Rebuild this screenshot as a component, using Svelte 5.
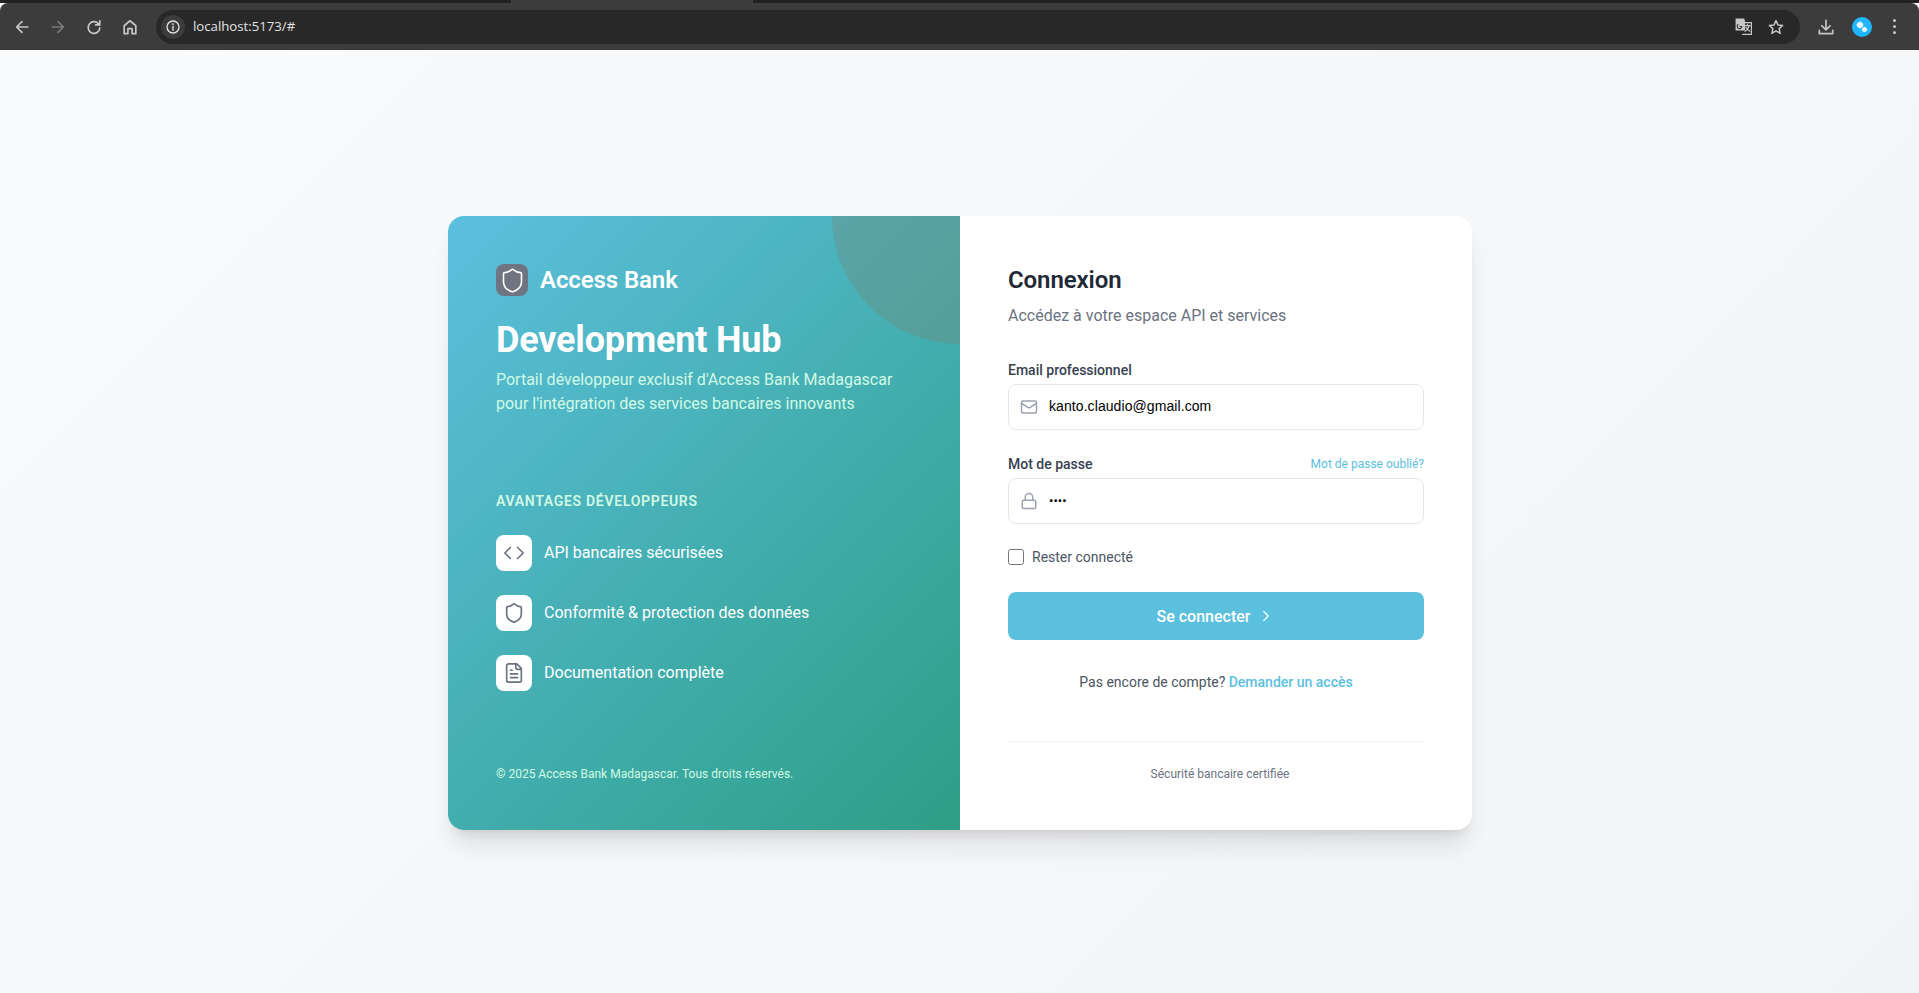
<script>
  const features = [
    { icon: 'code', text: 'API bancaires sécurisées' },
    { icon: 'shield', text: 'Conformité & protection des données' },
    { icon: 'doc', text: 'Documentation complète' }
  ];
  const shield = 'M20 13c0 5-3.500 7.500-7.660 8.950a1 1 0 0 1-.670-.010C7.500 20.500 4 18 4 13V6a1 1 0 0 1 1-1c2 0 4.500-1.200 6.240-2.720a1.170 1.170 0 0 1 1.520 0C14.510 3.810 17 5 19 5a1 1 0 0 1 1 1z';
</script>

<div class="browser">
  <div class="tabstrip"><span class="tab"></span></div>
  <div class="toolbar">
    <div class="navs">
      <svg class="nav" viewBox="0 0 24 24"><path d="M19 12H5.500M12 5.500 5.500 12l6.500 6.500"/></svg>
      <svg class="nav dim" viewBox="0 0 24 24"><path d="M5 12h13.500M12 5.500l6.500 6.500-6.500 6.500"/></svg>
      <svg class="nav" viewBox="0 0 24 24"><path d="M18 9a7 7 0 1 0 1 4M19 4.500V9.500h-5"/></svg>
      <svg class="nav" viewBox="0 0 24 24"><path d="M5 20V10.500L12 4.500l7 6V20h-4.500v-6h-5v6z"/></svg>
    </div>
    <div class="omni">
      <span class="info"><svg viewBox="0 0 24 24"><circle cx="12" cy="12" r="9"/><path d="M12 11v6M12 7v1.500"/></svg></span>
      <span class="url">localhost:5173/#</span>
      <span class="omni-right">
        <svg class="translate" viewBox="0 0 24 24"><path class="fill" d="M2 2h11l1 4v11H2z"/><path d="M10 7h12v15H11" /><path class="dark" d="M5 9.500a3 3 0 1 0 5 2.500H7.500"/><path d="M13.500 11h7M17 9v2M19 11c-1 4-3 6-5 7M15 13c1 2 3 4 5 5"/></svg>
        <svg class="star" viewBox="0 0 24 24"><path d="m12 3.500 2.600 5.800 6.200.7-4.600 4.200 1.300 6.200L12 17.200l-5.500 3.200 1.300-6.200L3.200 10l6.200-.7z"/></svg>
      </span>
    </div>
    <div class="tools">
      <svg class="nav" viewBox="0 0 24 24"><path d="M12 4v11M7 10.500l5 5 5-5M4 16v4h16v-4"/></svg>
      <span class="avatar"><span class="blob b1"></span><span class="blob b2"></span></span>
      <span class="dots"><i></i><i></i><i></i></span>
    </div>
  </div>

  <main class="page">
    <div class="card">
      <section class="left">
        <span class="circle"></span>
        <div class="brand">
          <span class="logo"><svg viewBox="0 0 24 24"><path d={shield}/></svg></span>
          <span class="brand-name">Access Bank</span>
        </div>
        <h1>Development Hub</h1>
        <p class="desc">Portail développeur exclusif d'Access Bank Madagascar<br />pour l'intégration des services bancaires innovants</p>
        <h2>Avantages développeurs</h2>
        <ul>
          {#each features as f}
            <li>
              <span class="ficon">
                <svg viewBox="0 0 24 24">
                  {#if f.icon === 'code'}
                    <path d="m16 18 6-6-6-6M8 6l-6 6 6 6"/>
                  {:else if f.icon === 'shield'}
                    <path d={shield}/>
                  {:else}
                    <path d="M15 2H6a2 2 0 0 0-2 2v16a2 2 0 0 0 2 2h12a2 2 0 0 0 2-2V7ZM14 2v4a2 2 0 0 0 2 2h4M10 9H8M16 13H8M16 17H8"/>
                  {/if}
                </svg>
              </span>
              <span class="ftext">{f.text}</span>
            </li>
          {/each}
        </ul>
        <p class="copy">© 2025 Access Bank Madagascar. Tous droits réservés.</p>
      </section>

      <section class="right">
        <h3>Connexion</h3>
        <p class="sub">Accédez à votre espace API et services</p>

        <label class="lab" for="em">Email professionnel</label>
        <div class="field">
          <svg viewBox="0 0 24 24"><rect x="2" y="4" width="20" height="16" rx="2"/><path d="m22 7-8.970 5.700a1.940 1.940 0 0 1-2.060 0L2 7"/></svg>
          <input id="em" type="email" value="kanto.claudio@gmail.com" />
        </div>

        <div class="lab-row">
          <label class="lab" for="pw">Mot de passe</label>
          <a href="#top" class="forgot">Mot de passe oublié?</a>
        </div>
        <div class="field">
          <svg viewBox="0 0 24 24"><rect x="3" y="11" width="18" height="11" rx="2"/><path d="M7 11V7a5 5 0 0 1 10 0v4"/></svg>
          <input id="pw" class="pw" type="password" value="1234" />
        </div>

        <label class="check"><input type="checkbox" /><span>Rester connecté</span></label>

        <button type="button" class="submit">
          <span>Se connecter</span>
          <svg viewBox="0 0 24 24"><path d="m9 18 6-6-6-6"/></svg>
        </button>

        <p class="ask">Pas encore de compte? <a href="#top">Demander un accès</a></p>

        <div class="foot">Sécurité bancaire certifiée</div>
      </section>
    </div>
  </main>
</div>

<style>
  :global(body) { margin: 0; font-family: Roboto, "Liberation Sans", sans-serif; }
  .browser { height: 993px; display: flex; flex-direction: column; overflow: hidden; }
  .tabstrip { height: 3px; background: #1f2221; position: relative; flex: none; }
  .tab { position: absolute; top: 0; left: 511px; width: 242px; height: 3px; background: #3c3c3c; }
  .toolbar { height: 47px; flex: none; background: #3c3c3c; border-radius: 8px 8px 0 0; display: flex; align-items: center; box-sizing: border-box; padding: 0 0 0 12px; }
  .navs { display: flex; gap: 16px; width: 144px; flex: none; }
  svg { display: block; fill: none; stroke-linecap: round; stroke-linejoin: round; }
  .nav { width: 20px; height: 20px; stroke: #c7c7c7; stroke-width: 2; }
  .nav.dim { stroke: #7b7b7b; }
  .omni { flex: 1; height: 34px; background: #282828; border-radius: 17px; display: flex; align-items: center; padding: 0 0 0 5px; margin-right: 16px; }
  .info { width: 24px; height: 24px; background: #3c3c3c; border-radius: 50%; display: flex; align-items: center; justify-content: center; }
  .info svg { width: 16px; height: 16px; stroke: #e3e3e3; stroke-width: 2; }
  .url { color: #e3e3e3; font: 13.200px "Open Sans", sans-serif; margin: 0 0 2px 8px; }
  .omni-right { margin-left: auto; display: flex; gap: 14px; align-items: center; padding-right: 15px; }
  .translate { width: 19px; height: 19px; stroke: #c7c7c7; stroke-width: 1.500; }
  .translate .fill { fill: #c7c7c7; stroke: none; }
  .translate .dark { stroke: #3c3c3c; }
  .star { width: 18px; height: 18px; stroke: #c7c7c7; stroke-width: 2; }
  .tools { display: flex; align-items: center; gap: 16px; width: 103px; flex: none; }
  .avatar { width: 20px; height: 20px; border-radius: 50%; background: #1fb6ff; position: relative; overflow: hidden; flex: none; }
  .blob { position: absolute; background: #eaf6fb; border-radius: 2px; transform: rotate(45deg); }
  .b1 { left: 5px; top: 5px; width: 6px; height: 6px; }
  .b2 { left: 10px; top: 10px; width: 5px; height: 5px; }
  .dots { display: flex; flex-direction: column; gap: 3.300px; margin-left: 5px; }
  .dots i { width: 3px; height: 3px; border-radius: 50%; background: #c7c7c7; }

  .page { flex: 1; background: linear-gradient(135deg, #f9fafb, #f3f4f6); display: flex; align-items: flex-start; justify-content: center; padding: 166px 0 0 0; }
  .card { width: 1024px; height: 614px; margin-left: 1px; display: flex; border-radius: 16px; overflow: hidden; background: #fff; box-shadow: 0 20px 25px -5px rgba(0,0,0,.1), 0 8px 10px -6px rgba(0,0,0,.1); }
  .left { width: 512px; box-sizing: border-box; padding: 48px; position: relative; overflow: hidden; color: #fff; display: flex; flex-direction: column; background: linear-gradient(135deg, #5bc0de, #2e9e86); }
  .circle { position: absolute; width: 256px; height: 256px; right: -128px; top: -128px; border-radius: 50%; background: rgba(130,125,110,.3); }
  .brand { display: flex; align-items: center; gap: 12px; height: 32px; }
  .logo { width: 32px; height: 32px; border-radius: 8px; background: #6f7580; display: flex; align-items: center; justify-content: center; }
  .logo svg { width: 27px; height: 27px; stroke: #fff; stroke-width: 1.400; }
  .brand-name { font-size: 24px; font-weight: 600; letter-spacing: -.1px; }
  h1 { margin: 24px 0 0; font-size: 36px; line-height: 40px; font-weight: 700; letter-spacing: -.18px; }
  .desc { margin: 8px 0 0; font-size: 16px; line-height: 24px; color: #d1fae5; }
  h2 { margin: 75px 0 0; font-size: 14px; line-height: 20px; font-weight: 600; letter-spacing: .7px; text-transform: uppercase; color: #d1fae5; }
  ul { list-style: none; margin: 24px 0 0; padding: 0; display: flex; flex-direction: column; gap: 24px; }
  li { display: flex; align-items: center; gap: 12px; font-size: 16px; font-weight: 400; }
  .ftext { padding-bottom: 2px; }
  .ficon { width: 36px; height: 36px; background: #fff; border-radius: 8px; display: flex; align-items: center; justify-content: center; }
  .ficon svg { width: 22px; height: 22px; stroke: #6b7280; stroke-width: 1.800; }
  .copy { margin: auto 0 0; font-size: 12px; line-height: 16px; color: #d1fae5; }

  .right { width: 512px; box-sizing: border-box; padding: 48px; display: flex; flex-direction: column; }
  h3 { margin: 0; font-size: 24px; line-height: 32px; font-weight: 600; letter-spacing: -.1px; color: #1f2937; }
  .sub { margin: 8px 0 0; font-size: 16px; line-height: 24px; color: #6b7280; }
  .lab { display: block; font-size: 14px; line-height: 20px; font-weight: 500; color: #374151; }
  .sub + .lab { margin-top: 32px; }
  .field { margin-top: 4px; height: 46px; box-sizing: border-box; border: 1px solid #e5e7eb; border-radius: 8px; display: flex; align-items: center; padding: 0 12px 0 11px; gap: 11px; }
  .field svg { width: 18px; height: 18px; stroke: #9ca3af; stroke-width: 2; flex: none; }
  .field input { flex: 1; min-width: 0; border: 0; outline: 0; padding: 0 0 2px; background: transparent; font: 14px "Liberation Sans", sans-serif; letter-spacing: .08px; color: #000; }
  .field input.pw { font: 13px Roboto, sans-serif; letter-spacing: 0; }
  .lab-row { margin-top: 24px; display: flex; justify-content: space-between; align-items: center; }
  .forgot { font-size: 12px; color: #5bc0de; text-decoration: none; }
  .check { margin-top: 23px; display: flex; align-items: center; gap: 8px; font-size: 14px; line-height: 20px; color: #4b5563; height: 20px; }
  .check input { width: 16px; height: 16px; margin: 0; appearance: none; box-sizing: border-box; border: 1px solid #767676; border-radius: 2.500px; background: #fff; }
  .submit { margin-top: 25px; height: 48px; border: 0; border-radius: 8px; background: #5bc0de; color: #fff; font: 500 16px Roboto, sans-serif; display: flex; align-items: center; justify-content: center; gap: 7px; }
  .submit svg { width: 18px; height: 18px; stroke: #fff; stroke-width: 1.700; }
  .ask { margin: 32px 0 0; font-size: 14px; line-height: 20px; text-align: center; color: #4b5563; }
  .ask a { color: #5bc0de; text-decoration: none; font-weight: 500; }
  .foot { margin-top: 49px; border-top: 1px solid #f3f4f6; padding: 24px 0 0 8px; font-size: 12px; line-height: 16px; text-align: center; color: #6b7280; }
</style>
